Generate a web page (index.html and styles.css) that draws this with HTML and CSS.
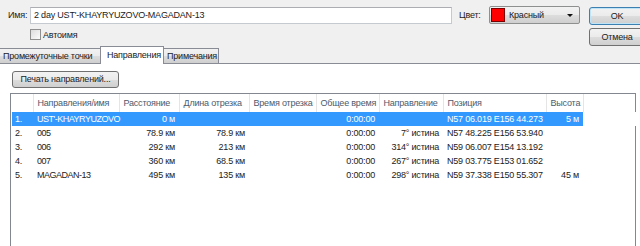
FILE: index.html
```html
<!DOCTYPE html>
<html>
<head>
    <title>Маршрут</title>
    <link rel="stylesheet" href="styles.css">
</head>
<body>
    <div class="dialog">
        <div class="head">
            <div class="head-main">
                <div class="name-row">
                    <span class="lbl lbl-name">Имя:</span>
                    <div class="field">2 day UST'-KHAYRYUZOVO-MAGADAN-13</div>
                    <span class="lbl lbl-color">Цвет:</span>
                    <div class="combo">
                        <span class="swatch"></span>
                        <span class="combo-text">Красный</span>
                        <span class="arrow"></span>
                    </div>
                </div>
                <div class="check-row">
                    <span class="checkbox"></span>
                    <span>Автоимя</span>
                </div>
            </div>
            <div class="buttons">
                <button class="btn btn-default">OK</button>
                <button class="btn">Отмена</button>
            </div>
        </div>

        <div class="tabs">
            <div class="tab">Промежуточные точки</div>
            <div class="tab active">Направления</div>
            <div class="tab">Примечания</div>
        </div>

        <div class="panel">
            <button class="btn btn-print">Печать направлений...</button>
            <div class="list">
                <table>
                    <colgroup>
                        <col class="c-num"><col class="c-name"><col class="c-dist"><col class="c-leg">
                        <col class="c-legtime"><col class="c-total"><col class="c-dir"><col class="c-pos">
                        <col class="c-alt"><col>
                    </colgroup>
                    <thead>
                        <tr>
                            <th></th>
                            <th>Направления/имя</th>
                            <th>Расстояние</th>
                            <th>Длина отрезка</th>
                            <th>Время отрезка</th>
                            <th>Общее время</th>
                            <th>Направление</th>
                            <th>Позиция</th>
                            <th>Высота</th>
                            <th class="filler"></th>
                        </tr>
                    </thead>
                    <tbody>
                        <tr class="selected">
                            <td>1.</td><td class="name">UST'-KHAYRYUZOVO</td><td class="r">0 м</td><td class="r"></td>
                            <td class="r"></td><td class="r">0:00:00</td><td class="r"></td>
                            <td>N57 06.019 E156 44.273</td><td class="r">5 м</td><td class="filler"></td>
                        </tr>
                        <tr>
                            <td>2.</td><td class="name">005</td><td class="r">78.9 км</td><td class="r">78.9 км</td>
                            <td class="r"></td><td class="r">0:00:00</td><td class="r">7° истина</td>
                            <td>N57 48.225 E156 53.940</td><td class="r"></td><td></td>
                        </tr>
                        <tr>
                            <td>3.</td><td class="name">006</td><td class="r">292 км</td><td class="r">213 км</td>
                            <td class="r"></td><td class="r">0:00:00</td><td class="r">314° истина</td>
                            <td>N59 06.007 E154 13.192</td><td class="r"></td><td></td>
                        </tr>
                        <tr>
                            <td>4.</td><td class="name">007</td><td class="r">360 км</td><td class="r">68.5 км</td>
                            <td class="r"></td><td class="r">0:00:00</td><td class="r">267° истина</td>
                            <td>N59 03.775 E153 01.652</td><td class="r"></td><td></td>
                        </tr>
                        <tr>
                            <td>5.</td><td class="name">MAGADAN-13</td><td class="r">495 км</td><td class="r">135 км</td>
                            <td class="r"></td><td class="r">0:00:00</td><td class="r">298° истина</td>
                            <td>N59 37.338 E150 55.307</td><td class="r">45 м</td><td></td>
                        </tr>
                    </tbody>
                </table>
            </div>
        </div>
    </div>
</body>
</html>
```

FILE: styles.css
```css
body {
    margin: 0;
    background: #f0f0f0;
    font-family: "Liberation Sans", Arial, sans-serif;
    font-size: 9px;
    letter-spacing: -0.2px;
    color: #222;
    height: 246px;
    overflow: hidden;
}
.dialog {
    display: flex;
    flex-direction: column;
    height: 246px;
}
.head {
    display: flex;
    gap: 9px;
    padding-top: 6px;
    height: 40px;
}
.head-main {
    width: 580px;
    flex: none;
}
.name-row {
    display: flex;
    align-items: center;
    height: 18px;
}
.lbl-name {
    width: 30px;
    padding-left: 8px;
    box-sizing: border-box;
}
.field {
    width: 422px;
    height: 17px;
    box-sizing: border-box;
    border: 1px solid #c5c9d0;
    border-top-color: #abadb3;
    background: #fff;
    padding: 0 3px;
    line-height: 15px;
    white-space: nowrap;
}
.lbl-color {
    width: 37px;
    padding-left: 7px;
    box-sizing: border-box;
}
.combo {
    width: 91px;
    height: 18px;
    box-sizing: border-box;
    border: 1px solid #8e8f8f;
    border-radius: 2px;
    background: linear-gradient(#f2f2f2, #ebebeb 50%, #dddddd 51%, #cfcfcf);
    display: flex;
    align-items: center;
    padding-left: 1px;
    position: relative;
}
.swatch {
    width: 12px;
    height: 12px;
    background: #ff0000;
    border: 1px solid #7a0000;
    margin-right: 4px;
}
.arrow {
    position: absolute;
    right: 6px;
    top: 7px;
    border-left: 3px solid transparent;
    border-right: 3px solid transparent;
    border-top: 3px solid #111;
}
.check-row {
    display: flex;
    align-items: center;
    gap: 2px;
    margin: 4px 0 0 30px;
    height: 13px;
}
.checkbox {
    width: 9px;
    height: 9px;
    border: 1px solid #8f8f8f;
    background: linear-gradient(135deg, #dcdcdc, #fbfbfb);
}
.buttons {
    display: flex;
    flex-direction: column;
    gap: 3px;
    padding-top: 1px;
}
.btn {
    font: inherit;
    letter-spacing: inherit;
    color: #222;
    height: 18px;
    border: 1px solid #707070;
    border-radius: 3px;
    background: linear-gradient(#f2f2f2, #ebebeb 50%, #dddddd 51%, #cfcfcf);
    padding: 0;
    line-height: 15px;
}
.buttons .btn {
    width: 75px;
    padding-right: 19px;
    text-align: center;
}
.btn-default {
    border-color: #3c7fb1;
    box-shadow: inset 0 0 0 1px #bfe4f7;
}
.tabs {
    display: flex;
    align-items: flex-end;
    height: 18px;
    border-bottom: 1px solid #898c95;
    box-sizing: border-box;
}
.tab {
    height: 15px;
    line-height: 14px;
    padding: 0 3px;
    border: 1px solid #898c95;
    border-bottom: none;
    border-right: none;
    background: linear-gradient(#f2f2f2, #ebebeb 50%, #dddddd 51%, #cfcfcf);
    box-sizing: border-box;
    white-space: nowrap;
}
.tab:first-child {
    width: 100px;
    border-left: none;
}
.tab.active {
    width: 64px;
    height: 18px;
    margin-bottom: -1px;
    background: #fff;
    line-height: 16px;
    padding-left: 6px;
    border-right: 1px solid #898c95;
}
.tab:last-child {
    width: 55px;
    border-left: none;
    border-right: 1px solid #898c95;
}
.panel {
    flex: 1;
    background: #fff;
    padding: 7px 0 0 10px;
    display: flex;
    flex-direction: column;
    align-items: flex-start;
    gap: 5px;
}
.btn-print {
    width: 107px;
    height: 17px;
    margin-left: 2px;
    text-align: center;
}
.list {
    flex: 1;
    width: 626px;
    border: 1px solid #828790;
    border-bottom: none;
    box-sizing: border-box;
    padding-left: 1px;
}
table {
    border-collapse: collapse;
    table-layout: fixed;
    width: 624px;
}
.c-num { width: 21px; }
.c-name { width: 86px; }
.c-dist { width: 60px; }
.c-leg { width: 70px; }
.c-legtime { width: 67px; }
.c-total { width: 63px; }
.c-dir { width: 64px; }
.c-pos { width: 103px; }
.c-alt { width: 37px; }
th {
    height: 18px;
    font-weight: normal;
    text-align: left;
    color: #4c5a6c;
    padding: 0 4px;
    border-right: 1px solid #e5e5e5;
    white-space: nowrap;
    overflow: hidden;
}
th:first-child {
    padding: 0;
}
th.filler {
    border-right: none;
}
td {
    height: 14px;
    line-height: 14px;
    padding: 0 4px;
    white-space: nowrap;
    overflow: hidden;
}
td:first-child {
    padding-left: 3px;
}
td.name {
    letter-spacing: -0.5px;
    padding-right: 0;
    overflow: visible;
}
td.r {
    text-align: right;
}
tr.selected td {
    background: #3399ff;
    color: #fff;
}
tr.selected td.filler {
    background: #fff;
}
```
